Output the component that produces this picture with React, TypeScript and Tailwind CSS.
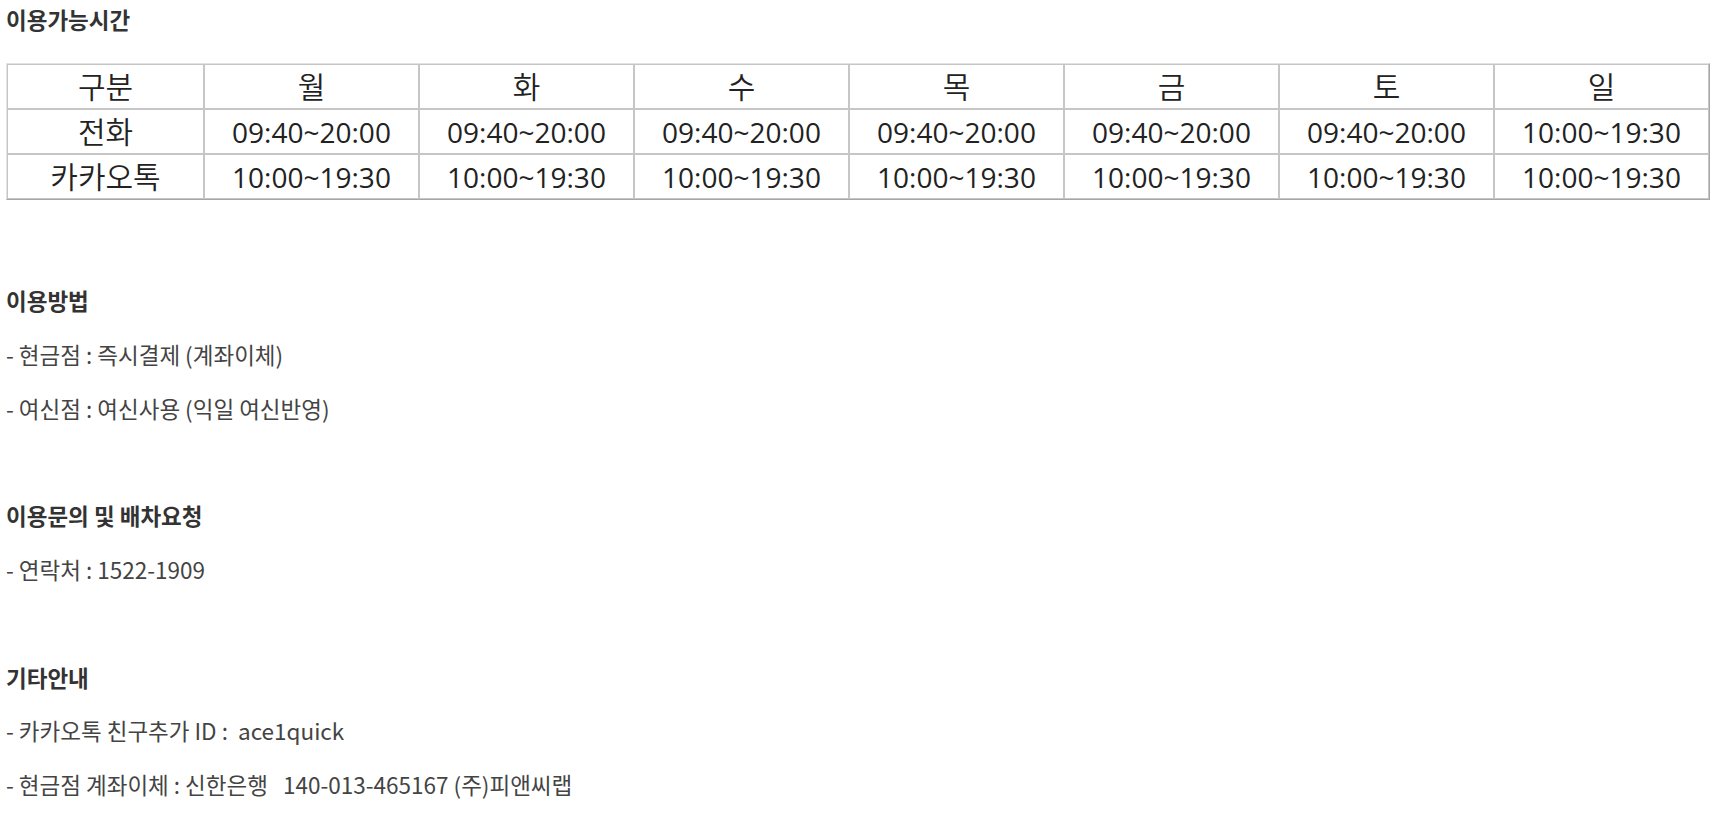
const days = ["월", "화", "수", "목", "금", "토", "일"]

const rows = [
  {
    label: "전화",
    times: [
      "09:40~20:00",
      "09:40~20:00",
      "09:40~20:00",
      "09:40~20:00",
      "09:40~20:00",
      "09:40~20:00",
      "10:00~19:30"
    ]
  },
  {
    label: "카카오톡",
    times: [
      "10:00~19:30",
      "10:00~19:30",
      "10:00~19:30",
      "10:00~19:30",
      "10:00~19:30",
      "10:00~19:30",
      "10:00~19:30"
    ]
  }
]

const sections = [
  {
    title: "이용방법",
    lines: ["- 현금점 : 즉시결제 (계좌이체)", "- 여신점 : 여신사용 (익일 여신반영)"]
  },
  {
    title: "이용문의 및 배차요청",
    lines: ["- 연락처 : 1522-1909"]
  },
  {
    title: "기타안내",
    lines: ["- 카카오톡 친구추가 ID :  ace1quick", "- 현금점 계좌이체 : 신한은행   140-013-465167 (주)피앤씨랩"]
  }
]

const cell =
  "h-[45px] p-0 text-center align-middle border border-[#c6c6c6] font-normal"

const kor = "font-['Noto_Sans_CJK_KR',sans-serif] font-[350] text-[30px] leading-none"

function App() {
  return (
    <div className="min-h-screen bg-white pl-[6px] pr-[10px] font-['Noto_Sans_CJK_KR','Noto_Sans',sans-serif] text-[#444]">

      <h2 className="text-[22.5px] font-bold leading-[38px] text-[#333] whitespace-pre">
        이용가능시간
      </h2>

      {/* 이용가능시간 표 */}
      <table className="mt-[25px] w-[1704px] table-fixed border-separate border-spacing-0 border border-t-[#e2e2e2] border-l-[#e2e2e2] border-b-[#a6a6a6] border-r-[#a6a6a6] font-['Open_Sans','Noto_Sans_CJK_KR',sans-serif] text-[28px] text-[#222]">
        <colgroup>
          <col className="w-[197px]" />
          {days.map((d) => (
            <col key={d} />
          ))}
        </colgroup>
        <thead>
          <tr>
            <th className={cell}>
              <span className={kor}>구분</span>
            </th>
            {days.map((d) => (
              <th key={d} className={cell}>
                <span className={kor}>{d}</span>
              </th>
            ))}
          </tr>
        </thead>
        <tbody>
          {rows.map((row) => (
            <tr key={row.label}>
              <td className={cell}>
                <span className={kor}>{row.label}</span>
              </td>
              {row.times.map((t, i) => (
                <td key={i} className={cell}>
                  {t}
                </td>
              ))}
            </tr>
          ))}
        </tbody>
      </table>

      <div className="mt-[74px] text-[22.5px] leading-[53.8px]">
        {sections.map((s, i) => (
          <div key={s.title}>
            {i > 0 && <div className="h-[53.8px]" />}
            <p className="font-bold text-[#333]">{s.title}</p>
            {s.lines.map((l) => (
              <p key={l} className="whitespace-pre">
                {l}
              </p>
            ))}
          </div>
        ))}
      </div>

    </div>
  )
}

export default App
